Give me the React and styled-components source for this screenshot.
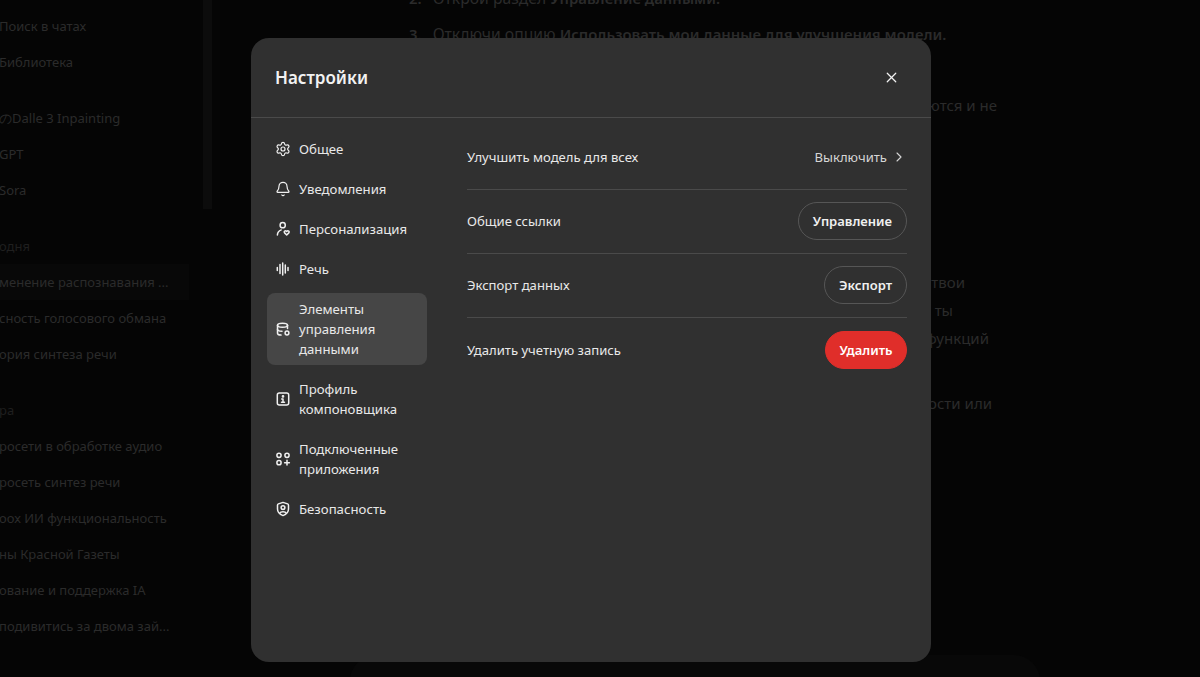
import React from 'react';
import styled, { createGlobalStyle } from 'styled-components';
import { Bell, Settings, X, ChevronRight } from 'lucide-react';

const FONT = '"Noto Sans", "Open Sans", "Liberation Sans", sans-serif';

const GlobalStyle = createGlobalStyle`
  html, body {
    margin: 0;
    height: 100%;
    overflow: hidden;
    background: #050505;
  }
  #root {
    height: 100%;
  }
  * {
    box-sizing: border-box;
  }
`;

const Page = styled.div`
  position: relative;
  display: flex;
  width: 1200px;
  height: 677px;
  overflow: hidden;
  font-family: ${FONT};
  background: #050505;
`;

const Side = styled.aside`
  position: relative;
  flex: 0 0 213px;
  padding-top: 8px;
  display: flex;
  flex-direction: column;
  gap: 20px;
`;

const Scrollbar = styled.div`
  position: absolute;
  top: 0;
  left: 203px;
  width: 9px;
  height: 209px;
  background: #0c0c0c;
`;

const SideGroup = styled.div`
  display: flex;
  flex-direction: column;
`;

const SideRow = styled.div`
  height: 36px;
  width: ${(p) => (p.$active ? '190px' : 'auto')};
  margin-left: -1px;
  display: flex;
  align-items: center;
  font-size: 13px;
  white-space: nowrap;
  color: ${(p) => (p.$muted ? '#1f1f1f' : '#2b2b2b')};
  background: ${(p) => (p.$active ? '#080808' : 'transparent')};
`;

const Main = styled.main`
  flex: 1;
  height: 677px;
  padding-left: 196px;
  display: flex;
  flex-direction: column;
  font-size: 15.7px;
  color: #2b2b2b;

  b {
    font-size: 14.9px;
    font-weight: 600;
  }
`;

const Line = styled.div`
  flex: none;
  width: ${(p) => p.$width}px;
  height: 24px;
  margin-top: ${(p) => p.$gap}px;
  font-size: 15px;
  display: flex;
  justify-content: flex-end;
  align-items: center;
  white-space: nowrap;
`;

const ListLine = styled.div`
  flex: none;
  height: 24px;
  margin-top: ${(p) => p.$gap}px;
  display: flex;
  align-items: center;
  gap: 11px;
  white-space: nowrap;
`;

const Composer = styled.div`
  flex: none;
  width: 690px;
  height: 52px;
  margin-top: auto;
  margin-left: -59px;
  margin-bottom: -30px;
  border-radius: 28px;
  background: #080808;
`;

const Modal = styled.section`
  position: absolute;
  top: 38px;
  left: 251px;
  width: 680px;
  height: 624px;
  border-radius: 18px;
  background: #303030;
  display: flex;
  flex-direction: column;
  color: #ececec;
`;

const Header = styled.header`
  flex: none;
  height: 80px;
  padding: 0 30px 0 24px;
  display: flex;
  align-items: center;
  justify-content: space-between;
  border-bottom: 1px solid #4a4a4a;
`;

const Title = styled.h2`
  margin: 0;
  font-size: 17px;
  font-weight: 600;
  color: #f2f2f2;
`;

const CloseButton = styled.button`
  width: 20px;
  height: 20px;
  padding: 0;
  border: 0;
  background: none;
  color: #f2f2f2;
  display: flex;
  align-items: center;
  justify-content: center;
`;

const Body = styled.div`
  flex: 1;
  padding: 0 24px 0 16px;
  display: flex;
  gap: 40px;
`;

const Nav = styled.nav`
  flex: 0 0 160px;
  padding-top: 15px;
  display: flex;
  flex-direction: column;
  gap: 8px;
`;

const NavItem = styled.a`
  padding: 6px 6px;
  border-radius: 8px;
  display: flex;
  align-items: center;
  gap: 6px;
  font-size: 13.2px;
  line-height: 20px;
  color: #e8e8e8;
  background: ${(p) => (p.$active ? '#464646' : 'transparent')};
`;

const NavIcon = styled.span`
  flex: 0 0 20px;
  height: 20px;
  display: flex;
  align-items: center;
  justify-content: center;
  color: #f0f0f0;
`;

const NavLabel = styled.span`
  max-width: 112px;
`;

const Content = styled.div`
  flex: 1;
  padding-top: 8px;
`;

const Row = styled.div`
  height: 64px;
  padding-bottom: ${(p) => (p.$last ? '0' : '2px')};
  display: flex;
  align-items: center;
  justify-content: space-between;
  font-size: 13.1px;
  color: #e8e8e8;
  border-bottom: ${(p) => (p.$last ? '0' : '1px solid #4a4a4a')};
`;

const ToggleValue = styled.span`
  display: flex;
  align-items: center;
  gap: 4px;
  color: #d6d6d6;
`;

const Button = styled.button`
  height: 38px;
  padding: 0 14px;
  border: 1px solid #565656;
  border-radius: 19px;
  background: transparent;
  font-family: ${FONT};
  font-size: 13px;
  font-weight: 600;
  color: #f0f0f0;
`;

const DangerButton = styled(Button)`
  padding: 0 13.5px;
  border-color: #e02e2a;
  background: #e02e2a;
  color: #ffffff;
`;

function Glyph({ children }) {
  return (
    <svg
      width="20"
      height="20"
      viewBox="0 0 20 20"
      fill="none"
      stroke="currentColor"
      strokeWidth="1.5"
      strokeLinecap="round"
      strokeLinejoin="round"
    >
      {children}
    </svg>
  );
}

const PersonIcon = () => (
  <Glyph>
    <circle cx="9.7" cy="6.2" r="2.6" />
    <path d="M4.4 16c.1-2.500 1.400-4.300 3.800-5.100" />
    <path d="M13.700 16l-2.100-2.100c-1.200-1.400.8-3 2.100-1.500 1.300-1.500 3.300.1 2.100 1.500z" />
  </Glyph>
);

const WaveIcon = () => (
  <Glyph>
    <path d="M4.300 8.500v3M7 5.500v9M9.700 4v12M12.300 6v8M15 8.500v3" />
  </Glyph>
);

const DataIcon = () => (
  <Glyph>
    <ellipse cx="9.500" cy="6.200" rx="5" ry="2" />
    <path d="M4.500 6.200v8c0 1.100 1.500 1.800 3.500 1.900" />
    <path d="M14.500 6.200v3.300" />
    <path d="M4.500 10.200c0 1.100 2.200 2 4.500 2" />
    <circle cx="14" cy="14" r="1.900" strokeWidth="1.500" />
  </Glyph>
);

const ProfileIcon = () => (
  <Glyph>
    <rect x="4.300" y="4" width="11.400" height="12" rx="2" />
    <circle cx="10" cy="7.400" r=".6" />
    <path d="M8.700 10h1.300v3.200M8.500 13.200h3" />
  </Glyph>
);

const AppsIcon = () => (
  <Glyph>
    <circle cx="6" cy="6.300" r="2.100" />
    <circle cx="14" cy="6.300" r="2.100" />
    <circle cx="6" cy="13.700" r="2.100" />
    <path d="M14 11.300v4.800M11.600 13.700h4.800" />
  </Glyph>
);

const ShieldIcon = () => (
  <Glyph>
    <path d="M10 3.400l4.600 1.500c.6.200.9.700.9 1.300V10c0 3.200-2.800 5.600-5.500 6.600-2.700-1-5.500-3.400-5.500-6.600V6.200c0-.6.300-1.100.9-1.300z" />
    <circle cx="10" cy="8.600" r="1.900" />
    <path d="M6.900 14c.7-1.700 5.500-1.700 6.200 0" />
  </Glyph>
);

const navItems = [
  { label: 'Общее', icon: <Settings size={16} strokeWidth={1.8} /> },
  { label: 'Уведомления', icon: <Bell size={16} strokeWidth={1.8} /> },
  { label: 'Персонализация', icon: <PersonIcon /> },
  { label: 'Речь', icon: <WaveIcon /> },
  { label: 'Элементы управления данными', icon: <DataIcon />, active: true },
  { label: 'Профиль компоновщика', icon: <ProfileIcon /> },
  { label: 'Подключенные приложения', icon: <AppsIcon /> },
  { label: 'Безопасность', icon: <ShieldIcon /> },
];

const sideGroups = [
  { rows: ['Поиск в чатах', 'Библиотека'] },
  { rows: ['のDalle 3 Inpainting', 'GPT', 'Sora'] },
  {
    title: 'одня',
    rows: ['менение распознавания ...', 'сность голосового обмана', 'ория синтеза речи'],
    activeRow: 0,
  },
  {
    title: 'ра',
    rows: [
      'росети в обработке аудио',
      'росеть синтез речи',
      'оох ИИ функциональность',
      'ны Красной Газеты',
      'ование и поддержка IA',
      'подивитись за двома зай...',
    ],
  },
];

// only the ends of these lines stick out from behind the modal
const chatLines = [
  { width: 588, gap: 47, text: 'ются и не' },
  { width: 556, gap: 153, text: 'ствои' },
  { width: 544, gap: 4, text: 'ы ты' },
  { width: 580, gap: 4, text: 'функций' },
  { width: 583, gap: 41, text: 'ности или' },
];

export default function App() {
  return (
    <Page>
      <GlobalStyle />
      <Side>
        <Scrollbar />
        {sideGroups.map((group) => (
          <SideGroup key={group.rows[0]}>
            {group.title && <SideRow $muted>{group.title}</SideRow>}
            {group.rows.map((row, i) => (
              <SideRow key={row} $active={group.activeRow === i}>
                {row}
              </SideRow>
            ))}
          </SideGroup>
        ))}
      </Side>

      <Main>
        <ListLine $gap={-14}>
          <b>2.</b>
          <span>
            Открой раздел <b>Управление данными.</b>
          </span>
        </ListLine>
        <ListLine $gap={12}>
          <b>3.</b>
          <span>
            Отключи опцию <b>Использовать мои данные для улучшения модели.</b>
          </span>
        </ListLine>
        {chatLines.map((line) => (
          <Line key={line.text} $width={line.width} $gap={line.gap}>
            {line.text}
          </Line>
        ))}
        <Composer />
      </Main>

      <Modal>
        <Header>
          <Title>Настройки</Title>
          <CloseButton type="button" aria-label="Закрыть">
            <X size={17} strokeWidth={1.7} />
          </CloseButton>
        </Header>
        <Body>
          <Nav>
            {navItems.map((item) => (
              <NavItem key={item.label} $active={item.active}>
                <NavIcon>{item.icon}</NavIcon>
                <NavLabel>{item.label}</NavLabel>
              </NavItem>
            ))}
          </Nav>
          <Content>
            <Row>
              <span>Улучшить модель для всех</span>
              <ToggleValue>
                Выключить
                <ChevronRight size={16} strokeWidth={1.6} />
              </ToggleValue>
            </Row>
            <Row>
              <span>Общие ссылки</span>
              <Button type="button">Управление</Button>
            </Row>
            <Row>
              <span>Экспорт данных</span>
              <Button type="button">Экспорт</Button>
            </Row>
            <Row $last>
              <span>Удалить учетную запись</span>
              <DangerButton type="button">Удалить</DangerButton>
            </Row>
          </Content>
        </Body>
      </Modal>
    </Page>
  );
}
